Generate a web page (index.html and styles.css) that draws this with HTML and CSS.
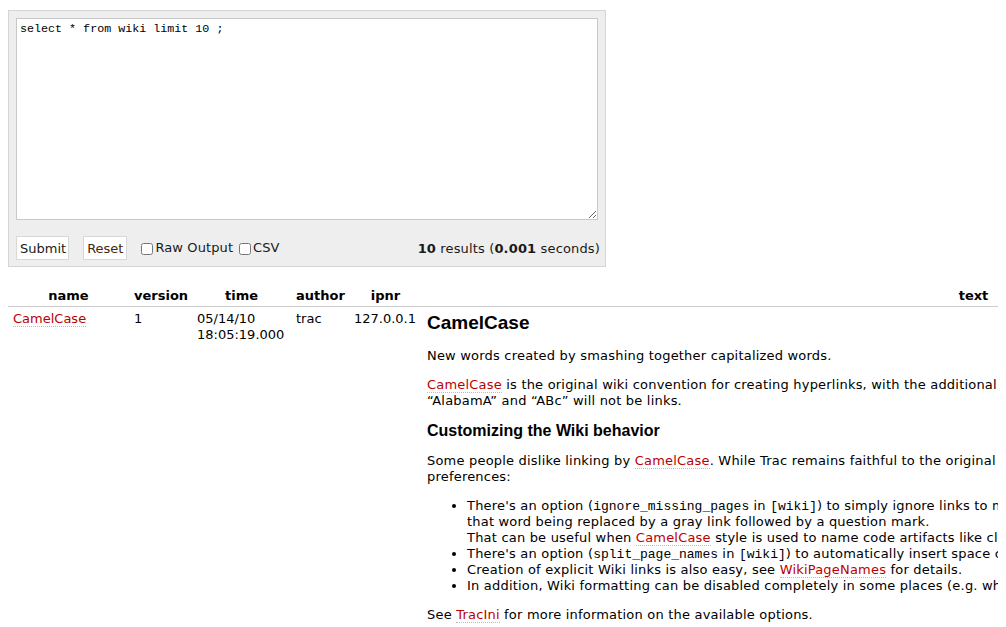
FILE: index.html
```html
<!DOCTYPE html>
<html>
<head>
<meta charset="utf-8">
<link rel="stylesheet" href="styles.css">
</head>
<body>
<form class="query-box">
  <textarea class="query">select * from wiki limit 10 ;</textarea>
  <div class="controls">
    <button type="button" class="btn">Submit</button>
    <button type="button" class="btn reset">Reset</button>
    <label class="opt"><input type="checkbox">Raw Output</label>
    <label class="opt"><input type="checkbox">CSV</label>
    <span class="results"><b>10</b> results (<b>0.001</b> seconds)</span>
  </div>
</form>

<table class="listing">
  <colgroup>
    <col class="c-name"><col class="c-version"><col class="c-time"><col class="c-author"><col class="c-ipnr"><col class="c-text">
  </colgroup>
  <thead>
    <tr><th>name</th><th>version</th><th>time</th><th>author</th><th>ipnr</th><th>text</th></tr>
  </thead>
  <tbody>
    <tr>
      <td><a href="#">CamelCase</a></td>
      <td>1</td>
      <td>05/14/10<br>18:05:19.000</td>
      <td>trac</td>
      <td>127.0.0.1</td>
      <td class="wiki">
        <h1>CamelCase</h1>
        <p>New words created by smashing together capitalized words.</p>
        <p><a href="#">CamelCase</a> is the original wiki convention for creating hyperlinks, with the additional requirement that the capitalized words contain lowercase letters; thus<br>“AlabamA” and “ABc” will not be links.</p>
        <h2>Customizing the Wiki behavior</h2>
        <p>Some people dislike linking by <a href="#">CamelCase</a>. While Trac remains faithful to the original wiki style, it provides a number of ways to accommodate users with different<br>preferences:</p>
        <ul>
          <li>There's an option (<code>ignore_missing_pages</code> in <code>[wiki]</code>) to simply ignore links to missing pages when the link is written using the CamelCase style, instead of<br>that word being replaced by a gray link followed by a question mark.<br>That can be useful when <a href="#">CamelCase</a> style is used to name code artifacts like class names and there's no corresponding page for them.</li>
          <li>There's an option (<code>split_page_names</code> in <code>[wiki]</code>) to automatically insert space characters between the words of a CamelCase link when rendering the link.</li>
          <li>Creation of explicit Wiki links is also easy, see <a href="#">WikiPageNames</a> for details.</li>
          <li>In addition, Wiki formatting can be disabled completely in some places (e.g. when rendering commit log messages). See wiki:TracIni#wiki-section</li>
        </ul>
        <p>See <a href="#">TracIni</a> for more information on the available options.</p>
      </td>
    </tr>
  </tbody>
</table>
</body>
</html>
```

FILE: styles.css
```css
body {
  margin: 8px;
  font-family: "DejaVu Sans", Verdana, sans-serif;
  font-size: 13px;
  line-height: 16px;
  color: #000;
  background: #fff;
}

a {
  color: #b00;
  text-decoration: none;
  border-bottom: 1px dotted #bbb;
}

.query-box {
  margin: 2px 0 0;
  width: 582px;
  padding: 7px 7px 6px;
  background: #eee;
  border: 1px solid #d4d4d4;
}

.query {
  display: block;
  box-sizing: border-box;
  width: 582px;
  height: 202px;
  margin: 0;
  padding: 3px 3px;
  border: 1px solid #c8c8c8;
  background: #fff;
  font-family: "Liberation Mono", "Courier New", monospace;
  font-size: 11.7px;
  line-height: 14px;
  color: #000;
}

.controls {
  display: flex;
  align-items: center;
  margin-top: 16px;
  height: 24px;
}

.btn {
  box-sizing: border-box;
  height: 24px;
  margin: 0 14px 0 0;
  padding: 1px 2px 0 3px;
  background: #fff;
  border: 1px solid #d8d8d8;
  font-family: "DejaVu Sans", Verdana, sans-serif;
  font-size: 13px;
  color: #1a1a1a;
}

.btn.reset {
  margin-right: 14px;
  padding: 1px 3px 0;
  color: #3d2810;
}

.opt {
  display: flex;
  align-items: center;
  margin-right: 6px;
  color: #1a1a1a;
  letter-spacing: 0.1px;
}

.opt input {
  width: 12px;
  height: 12px;
  margin: 1px 2px 0 0;
}

.results {
  margin-left: auto;
  margin-right: -2px;
  margin-top: 2px;
  color: #1a1a1a;
  letter-spacing: 0.15px;
}

.listing {
  margin-top: 18px;
  border-collapse: collapse;
  table-layout: fixed;
  width: 1517px;
}

.c-name { width: 121px; }
.c-version { width: 63px; }
.c-time { width: 99px; }
.c-author { width: 58px; }
.c-ipnr { width: 73px; }
.c-text { width: 1103px; }

.listing th {
  padding: 3px 5px 2px;
  text-align: center;
  font-weight: bold;
  border-bottom: 1px solid #ccc;
  white-space: nowrap;
}

.listing td {
  padding: 4px 5px;
  vertical-align: top;
  text-align: left;
}

.listing td.wiki {
  white-space: nowrap;
}

.wiki h1 {
  margin: 1px 0 14px;
  font-family: "Liberation Sans", Arial, sans-serif;
  font-size: 19px;
  line-height: 22px;
  font-weight: bold;
}

.wiki h2 {
  margin: 11px 0 13px;
  font-family: "Liberation Sans", Arial, sans-serif;
  font-size: 16px;
  line-height: 18px;
  font-weight: bold;
}

.wiki p,
.wiki ul {
  letter-spacing: 0.2px;
}

.wiki p {
  margin: 13px 0;
}

.wiki ul {
  margin: 13px 0 12px;
  padding-left: 40px;
}

.wiki code {
  font-family: "Liberation Mono", "Courier New", monospace;
  font-size: 13px;
  line-height: 14px;
  letter-spacing: 0;
}
```
